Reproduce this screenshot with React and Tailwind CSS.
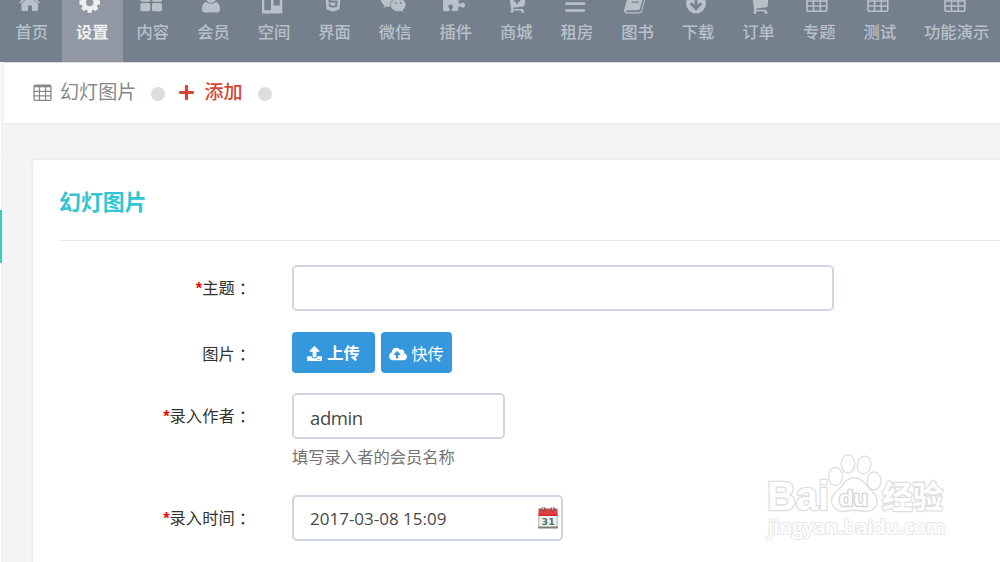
import React from 'react';
import { FaHtml5, FaWeixin, FaPuzzlePiece, FaPlus, FaCloudUploadAlt, FaUpload } from 'react-icons/fa';

function Grid({ size = 22, className }) {
  return (
    <svg className={className} width={size} height={size} viewBox="0 0 22 22" fill="none" stroke="currentColor">
      <rect x="1.2" y="2.6" width="19.6" height="17.6" rx="1.8" strokeWidth="1.5" />
      <path d="M1.2 3.8h19.6" strokeWidth="2.4" />
      <path d="M1 9.7h20M1 14.9h20M7.5 4v16M14.5 4v16" strokeWidth="1.4" />
    </svg>
  );
}

function Glyph({ children }) {
  return (
    <svg className="shrink-0 overflow-visible" width="26" height="28" viewBox="0 0 26 28" fill="currentColor">
      {children}
    </svg>
  );
}

const cart = 'M4.500 8.500h3.500l.6 3H22.500l-1 8.800L10 21.800l.3 1.200h9.700v1.500H8.300L6.500 10.500h-2z';

const GLYPHS = {
  home: (
    <>
      <path d="M10.500 10.500L19 17.500v6.500a1 1 0 0 1-1 1h-5v-5.500H9V25H3.500a1 1 0 0 1-1-1v-6.500z" />
      <path d="M.8 16.800L10.500 8.800l9.700 8" fill="none" stroke="currentColor" strokeWidth="1.700" />
    </>
  ),
  cog: (
    <g fill="none" stroke="currentColor" strokeWidth="4.400">
      <circle cx="10.700" cy="16.500" r="5.900" />
      <path d="M10.700 9.500V6.200M10.700 23.500v3.300M3.700 16.500H.4M17.700 16.500H21M5.800 11.600L3.500 9.300M15.600 21.400l2.300 2.300M15.600 11.600l2.300-2.300M5.800 21.400l-2.300 2.300" />
    </g>
  ),
  large: (
    <>
      <rect x="0.300" y="7.500" width="10" height="8.200" rx="1.600" />
      <rect x="12" y="7.500" width="10" height="8.200" rx="1.600" />
      <rect x="0.300" y="17" width="10" height="8.200" rx="1.600" />
      <rect x="12" y="17" width="10" height="8.200" rx="1.600" />
    </>
  ),
  user: (
    <>
      <circle cx="11" cy="11.500" r="5.300" />
      <path d="M5.800 15.800C3 17 2 20 2 23.200c0 2 1.300 3.300 3.200 3.300h11.600c1.900 0 3.200-1.300 3.200-3.300c0-3.200-1-6.200-3.800-7.400c-2.600 2.600-7.800 2.600-10.400 0z" />
    </>
  ),
  board: <path fillRule="evenodd" d="M1 7h20.300v20.500H1zM3.300 9.500v14.800h6.700V9.500zM12.500 9.500v10h6.300v-10z" />,
  html5: <FaHtml5 x="0.500" y="6" size={21} />,
  weixin: <FaWeixin x="-1.700" y="3" size={26} />,
  puzzle: <FaPuzzlePiece x="0" y="4.500" size={22} />,
  cartplus: (
    <>
      <path d={cart} />
      <circle cx="9" cy="25.200" r="1.500" />
      <circle cx="19.500" cy="25.200" r="1.500" />
      <path d="M14 11v7M10.800 14.800h6.400" stroke="#74808c" strokeWidth="1.800" />
    </>
  ),
  lines: <path d="M2.400 9.500h17.600M2.400 17.700h17.600M2.400 24.500h17.600" stroke="currentColor" strokeWidth="2.700" strokeLinecap="round" />,
  book: (
    <>
      <path d="M6.500 7h12c1.400 0 1.900 1 1.500 2.200l-4 13.300c-.3 1.200-1.200 1.700-2.300 1.700H3.500c-1.800 0-2 2 .1 2h11.600c1 0 1.600-.4 1.900-1.300l4-14c.6.300.9 1 .7 1.700l-3.900 13c-.4 1.300-1.400 2-2.700 2H3.500c-2.300 0-4-1.800-3.200-4.300L4.500 8.500C4.800 7.500 5.500 7 6.500 7z" />
      <path d="M8.500 13.300h7M7.700 16.200h7" stroke="#74808c" strokeWidth="1.300" />
    </>
  ),
  arrow: (
    <>
      <circle cx="11" cy="17.500" r="10" />
      <path d="M11 11v11M5.800 17.300l5.200 5.200 5.200-5.200" fill="none" stroke="#74808c" strokeWidth="2.700" />
    </>
  ),
  cart: (
    <>
      <path transform="translate(0 .8)" d={cart} />
      <circle cx="9" cy="26.200" r="1.500" />
      <circle cx="20" cy="26.200" r="1.500" />
    </>
  ),
  grid: (
    <g fill="none" stroke="currentColor">
      <rect x="1" y="7" width="19.800" height="18.300" rx="1.800" strokeWidth="1.600" />
      <path d="M1 8.500h20" strokeWidth="2.600" />
      <path d="M1 15h20M1 20h20M7.500 8v17M14.300 8v17" strokeWidth="1.500" />
    </g>
  ),
};

const NAV = [
  ['首页', 'home'],
  ['设置', 'cog'],
  ['内容', 'large'],
  ['会员', 'user'],
  ['空间', 'board'],
  ['界面', 'html5'],
  ['微信', 'weixin'],
  ['插件', 'puzzle'],
  ['商城', 'cartplus'],
  ['租房', 'lines'],
  ['图书', 'book'],
  ['下载', 'arrow'],
  ['订单', 'cart'],
  ['专题', 'grid'],
  ['测试', 'grid'],
  ['功能演示', 'grid'],
];

function Nav() {
  return (
    <nav className="flex h-[62px] shrink-0 overflow-hidden bg-[#74808c] pl-[1.400px]">
      {NAV.map(([label, glyph], i) => (
        <div
          key={label}
          className={
            '-mt-[14px] flex h-[76px] shrink-0 flex-col items-center px-[14px] ' +
            (i === 1 ? 'bg-[#9197a3] font-bold text-[#eeeff1]' : 'font-medium text-[#b8c0c9]')
          }
        >
          <Glyph>{GLYPHS[glyph]}</Glyph>
          <span className="mt-[7px] whitespace-nowrap text-[16.300px] leading-[22px]">{label}</span>
        </div>
      ))}
    </nav>
  );
}

function Row({ label, required, className, children }) {
  return (
    <div className={'flex items-start ' + className}>
      <div className="flex h-[46px] w-[220px] shrink-0 items-center justify-end text-[16.300px] text-[#333]">
        {required && <span className="font-['Liberation_Sans',sans-serif] font-bold text-[#f00]">*</span>}
        <span>{label}</span>
        <span lang="zh-TW" className="font-['Noto_Sans_CJK_TC',sans-serif]">：</span>
      </div>
      <div className="ml-[41px]">{children}</div>
    </div>
  );
}

function Calendar() {
  return (
    <svg className="-mt-[3px]" width="20" height="23" viewBox="0 0 20 23">
      <path d="M.8 7h18.400v14.500H.8z" fill="#eef3f1" stroke="#b8b3ac" strokeWidth="1" />
      <path d="M0 20.500h20v2H0z" fill="#887d76" />
      <path d="M.5 2.500h19v7.500H.5z" fill="#e73c43" />
      <path d="M1 8.500h18v1.500H1z" fill="#c92c35" />
      <circle cx="5.300" cy="3.200" r="2.200" fill="#705759" />
      <circle cx="14.700" cy="3.200" r="2.200" fill="#705759" />
      <path d="M4.300.5h1.500v3H4.300zM13.800.5h1.500v3h-1.500z" fill="#ddd" />
      <text x="10.200" y="18.800" textAnchor="middle" fontFamily="DejaVu Sans" fontWeight="700" fontSize="9.500" fill="#56706e">31</text>
    </svg>
  );
}

function Watermark() {
  return (
    <svg className="pointer-events-none absolute left-[750px] top-[440px]" width="250" height="122" viewBox="0 0 250 122">
      <g fill="#fff" stroke="#dedede" strokeWidth="1.300" strokeLinejoin="round">
        <g strokeWidth="2.600" paintOrder="stroke" fontFamily="Liberation Sans" fontWeight="700">
          <text x="17" y="70" fontSize="40" textLength="62" lengthAdjust="spacingAndGlyphs">Bai</text>
          <text x="132" y="68" fontSize="31" fontFamily="Noto Sans CJK SC" textLength="61" lengthAdjust="spacingAndGlyphs">经验</text>
        </g>
        <ellipse cx="85.500" cy="36.500" rx="7" ry="9" />
        <ellipse cx="98" cy="24" rx="6.800" ry="9.200" />
        <ellipse cx="114" cy="25" rx="6.800" ry="9" transform="rotate(10 114 25)" />
        <ellipse cx="124" cy="41" rx="7" ry="9" />
        <path d="M104 38c-9 0-10 7-16 12c-6 5-8 11-5 16c3 5 8 6 13 5c5-1 10-1 15 0c6 1 12 0 15-5c3-6 0-11-5-16c-6-5-8-12-17-12z" />
        <text x="89" y="66" fontSize="22" fontFamily="Liberation Sans" fontWeight="700" textLength="29" lengthAdjust="spacingAndGlyphs" stroke="#d4d4d4" strokeWidth="2.600" paintOrder="stroke">du</text>
        <text x="18" y="94" fontSize="20" fontFamily="Open Sans" fontWeight="600" textLength="177" lengthAdjust="spacingAndGlyphs" stroke="#e8e8e8" strokeWidth="2.200" paintOrder="stroke">jingyan.baidu.com</text>
      </g>
    </svg>
  );
}

const FIELD = 'flex h-[46px] items-center rounded-[5px] border-2 border-[#cfd5e3] bg-white pl-[16px] text-[#484848] ';

export default function App() {
  return (
    <div lang="zh-CN" className="relative flex h-[562px] w-[1000px] flex-col overflow-hidden bg-[#f4f4f4] font-['Open_Sans','Noto_Sans_CJK_SC',sans-serif]">
      <Nav />
      <div className="flex min-h-0 flex-1">
        <aside className="flex w-[2px] shrink-0 flex-col border-r border-[#edf3f7] bg-white">
          <div className="mt-[94px] h-px bg-[#e8edf0]" />
          <div className="mt-[53px] h-[53px] w-[1.500px] bg-[#36d1be]" />
        </aside>
        <main className="flex min-w-0 flex-1 flex-col">
          <div className="flex h-[63px] shrink-0 items-center border-b-2 border-l-2 border-t border-b-[#e9eef2] border-l-[#eff5f9] border-t-[#d9dde3] bg-white pb-[2px] pl-[29px] text-[19.100px] text-[#888]">
            <span className="flex w-[20px] justify-center"><Grid size={19} className="-ml-px" /></span>
            <span className="ml-[7px]">幻灯图片</span>
            <span className="ml-[15px] mt-[3px] h-[14px] w-[14px] rounded-full bg-[#ddd]" />
            <FaPlus size={17} className="ml-[13px] text-[#d64635]" />
            <span className="ml-[9px] font-medium text-[#d64635]">添加</span>
            <span className="ml-[15px] mt-[3px] h-[14px] w-[14px] rounded-full bg-[#ddd]" />
          </div>
          <section className="ml-[29px] mt-[33px] flex flex-1 flex-col rounded-tl-[5px] border-l-2 border-t-2 border-[#e9eef3] bg-white pl-[26px]">
            <h2 className="flex h-[81px] shrink-0 items-center border-b border-[#e9edf3] pt-[5px] text-[21.900px] font-semibold text-[#32c5d2]">幻灯图片</h2>
            <div className="-ml-[28px]">
              <Row label="主题" required className="mt-[24px]">
                <div className={FIELD + 'w-[542px]'} />
              </Row>
              <Row label="图片" className="mt-[20px]">
                <div className="flex gap-[6px] pt-px text-white">
                  <button className="flex h-[41px] w-[83px] items-center justify-center rounded-[4px] bg-[#3598dc] pt-px text-[16.300px] font-bold">
                    <FaUpload size={15} className="mr-[5px]" />上传
                  </button>
                  <button className="flex h-[41px] w-[71px] items-center justify-center rounded-[4px] bg-[#3598dc] pt-[3px] text-[16.300px]">
                    <FaCloudUploadAlt size={18} className="mr-[4px]" />快传
                  </button>
                </div>
              </Row>
              <Row label="录入作者" required className="mt-[16px]">
                <div className={FIELD + 'w-[213px] pt-[3px] text-[18.500px] tracking-[-0.400px]'}>admin</div>
                <p className="mt-[6px] text-[16.300px] leading-[24px] text-[#737373]">填写录入者的会员名称</p>
              </Row>
              <Row label="录入时间" required className="mt-[26px]">
                <div className={FIELD + 'w-[271px] justify-between pr-[3px] pt-px text-[17px]'}>
                  <span>2017-03-08 15:09</span>
                  <Calendar />
                </div>
              </Row>
            </div>
          </section>
        </main>
      </div>
      <Watermark />
    </div>
  );
}
